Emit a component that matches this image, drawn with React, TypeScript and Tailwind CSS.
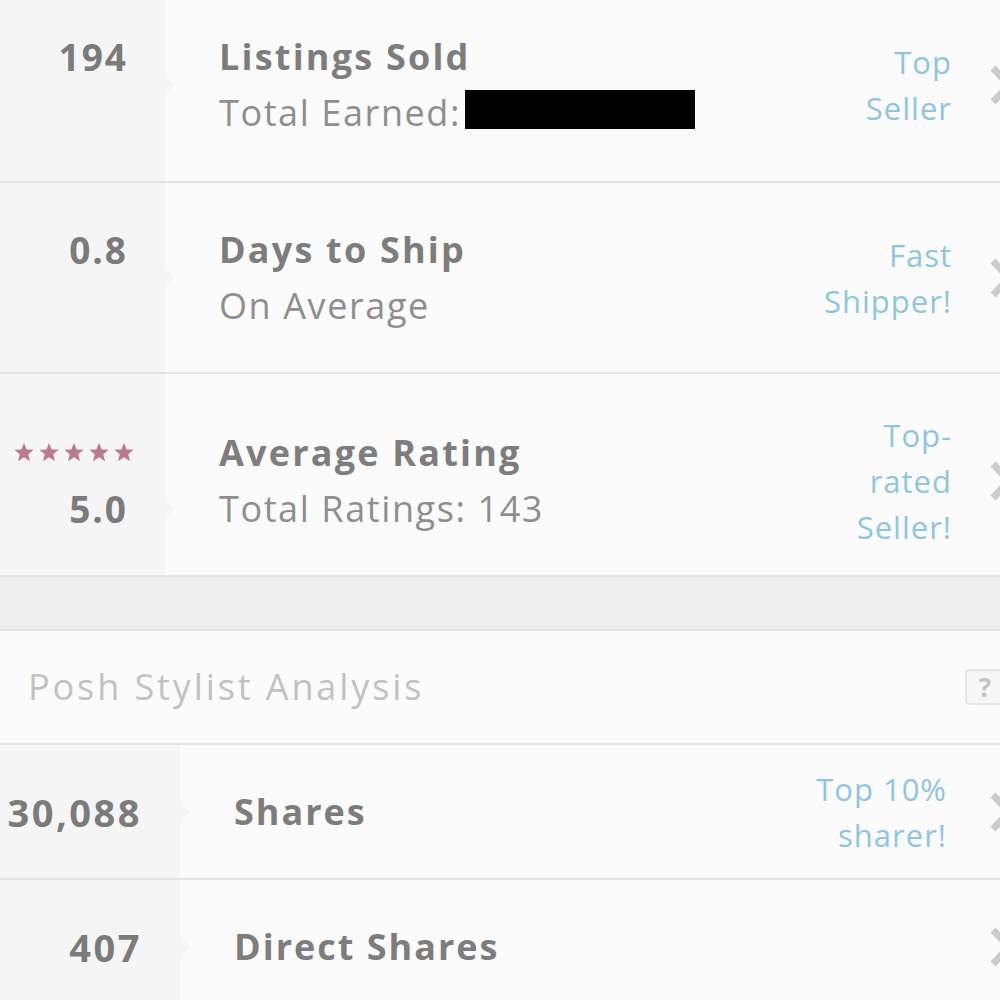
import React from 'react';

interface StatRow {
  value: string;
  stars?: boolean;
  title: string;
  subtitle?: string;
  badge: string[];
  height: string;
  pad: string;
}

const SELLER_ROWS: StatRow[] = [
  { value: '194', title: 'Listings Sold', subtitle: 'Total Earned:', badge: ['Top', 'Seller'], height: 'h-[183px]', pad: 'pb-[12px]' },
  { value: '0.8', title: 'Days to Ship', subtitle: 'On Average', badge: ['Fast', 'Shipper!'], height: 'h-[191px]', pad: 'pb-0' },
  { value: '5.0', stars: true, title: 'Average Rating', subtitle: 'Total Ratings: 143', badge: ['Top-', 'rated', 'Seller!'], height: 'h-[203px]', pad: 'pt-[12px]' },
];

const FONT = "font-['Open_Sans','Lato',sans-serif]";

function Chevron() {
  return (
    <div className="w-[9px] h-[40px] overflow-hidden shrink-0 ml-[39px]">
      <svg width="24" height="40" viewBox="0 0 24 40">
        <path d="M2 3 L18 20 L2 37" fill="none" stroke="#cccccc" strokeWidth="7" />
      </svg>
    </div>
  );
}

function Notch() {
  return (
    <div className="w-0 h-0 border-y-[11px] border-y-transparent border-l-[10px] border-l-[#f6f5f5]" />
  );
}

function Stars() {
  return (
    <div className="flex gap-[3px] h-[56px] items-center justify-end pr-[30px]">
      {[0, 1, 2, 3, 4].map((i) => (
        <svg key={i} width="22" height="21" viewBox="0 0 24 23">
          <path
            d="M12 1 L14.9 8.2 L22.6 8.6 L16.6 13.5 L18.6 21 L12 16.8 L5.4 21 L7.4 13.5 L1.4 8.6 L9.1 8.2 Z"
            fill="#b97b8b"
          />
        </svg>
      ))}
    </div>
  );
}

function SellerRow({ row }: { row: StatRow }) {
  return (
    <div className={`flex ${row.height} border-b-2 border-[#e4e3e3]`}>
      <div className="w-[165px] shrink-0 bg-[#f6f5f5] flex items-center">
        <div className={`w-full flex flex-col ${row.pad}`}>
          {row.stars && <Stars />}
          <div className="h-[56px] leading-[56px] text-right pr-[37px] text-[37px] font-bold tracking-[2px] text-[#7b7b7b]">{row.value}</div>
          {!row.stars && <div className="h-[56px]" />}
        </div>
      </div>
      <div className={`flex-1 flex items-center bg-[#fcfbfc] ${row.pad}`}>
        <div className="flex flex-col justify-center -ml-px">
          <div className={`flex items-center ${row.stars ? 'mt-[56px]' : ''}`}>
            <Notch />
          </div>
        </div>
        <div className="flex-1 flex flex-col pl-[45px]">
          <div className="h-[56px] leading-[56px] text-[36px] font-bold tracking-[2.2px] text-[#7d7d7d]">{row.title}</div>
          <div className="h-[56px] leading-[56px] text-[36px] tracking-[1.6px] text-[#8e8e8e] flex items-center">
            {row.subtitle}
            {row.title === 'Listings Sold' && <span className="inline-block w-[230px] h-[39px] bg-black ml-[4px] -mt-[6px]" />}
          </div>
        </div>
        <div className="flex flex-col items-end text-right text-[31px] tracking-[1px] leading-[46px] text-[#8fc5e2]">
          {row.badge.map((b) => (
            <span key={b}>{b}</span>
          ))}
        </div>
        <Chevron />
      </div>
    </div>
  );
}

function StylistRow({ value, title, badge }: { value: string; title: string; badge: string[] }) {
  return (
    <div className="flex h-[135px] border-b-2 border-[#e4e3e3]">
      <div className="w-[180px] shrink-0 bg-[#f6f5f5] flex items-center justify-end pr-[38px]">
        <span className="text-[38px] font-bold tracking-[2.5px] text-[#7b7b7b] leading-none">{value}</span>
      </div>
      <div className="flex-1 flex items-center bg-[#fcfbfc]">
        <Notch />
        <div className="flex-1 pl-[44px] text-[36px] font-bold tracking-[2px] text-[#7d7d7d]">{title}</div>
        <div className="flex flex-col items-end text-right text-[31px] tracking-[1px] leading-[46px] text-[#8fc5e2]">
          {badge.map((b) => (
            <span key={b}>{b}</span>
          ))}
        </div>
        <div className="ml-[5px]">
          <Chevron />
        </div>
      </div>
    </div>
  );
}

export default function App() {
  return (
    <div className={`w-[1000px] h-[1000px] overflow-hidden bg-[#fcfbfc] ${FONT}`}>
      {SELLER_ROWS.map((row) => (
        <SellerRow key={row.title} row={row} />
      ))}
      <div className="h-[54px] bg-[#efeeee] border-b-2 border-[#e4e3e3]" />
      <div className="h-[114px] flex items-center justify-between pl-[28px] border-b-2 border-[#e4e3e3] bg-[#fcfbfc]">
        <span className="text-[36px] tracking-[2.9px] text-[#c2c2c2]">Posh Stylist Analysis</span>
        <div className="w-[40px] h-[36px] -mr-[5px] rounded-[5px] border-2 border-[#e6e5e5] bg-[#f7f6f6] flex items-center justify-center text-[26px] font-bold text-[#c4c4c4]">
          ?
        </div>
      </div>
      <StylistRow value="30,088" title="Shares" badge={['Top 10%', 'sharer!']} />
      <StylistRow value="407" title="Direct Shares" badge={[]} />
    </div>
  );
}
